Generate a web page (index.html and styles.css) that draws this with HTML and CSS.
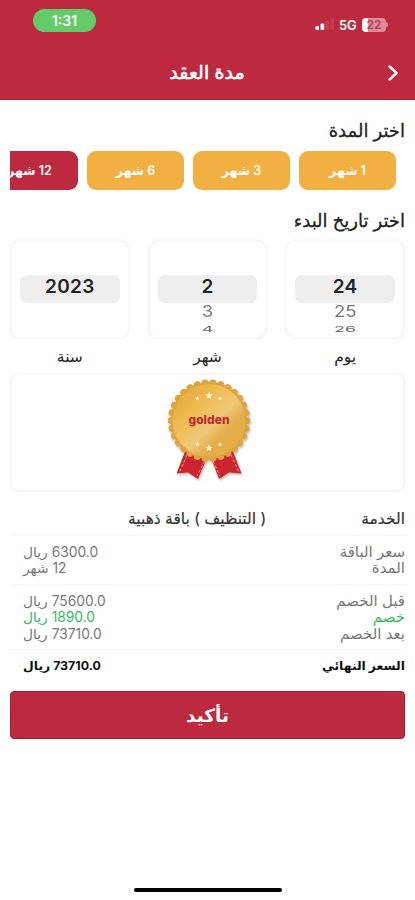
FILE: index.html
```html
<!DOCTYPE html>
<html lang="ar" dir="rtl">
<head>
    <meta charset="UTF-8">
    <title>مدة العقد</title>
    <link rel="stylesheet" href="styles.css">
</head>
<body>
<header class="header">
    <div class="status-bar" dir="ltr">
        <span class="time">1:31</span>
        <div class="status-icons">
            <svg class="signal" width="20" height="14" viewBox="0 0 20 14">
                <rect x="0.5" y="8" width="3.5" height="4" rx="1" fill="#fff"/>
                <rect x="5.5" y="5.5" width="3.7" height="6.5" rx="1" fill="#fff"/>
                <rect x="10.5" y="3" width="3.5" height="9" rx="1" fill="#c73b50"/>
                <rect x="15.5" y="0.5" width="3.5" height="11.5" rx="1" fill="#c73b50"/>
            </svg>
            <span class="network">5G</span>
            <span class="battery">22</span>
            <span class="battery-tip"></span>
        </div>
    </div>
    <div class="title-bar">
        <h1>مدة العقد</h1>
        <svg class="back" width="12" height="18" viewBox="0 0 12 18">
            <path d="M2.500 2.500 L9.500 9 L2.500 15.500" fill="none" stroke="#fff" stroke-width="2.5" stroke-linecap="round" stroke-linejoin="round"/>
        </svg>
    </div>
</header>
<main class="container">
    <h2>اختر المدة</h2>
    <div class="durations">
        <button class="duration">1 شهر</button>
        <button class="duration">3 شهر</button>
        <button class="duration">6 شهر</button>
        <button class="duration active">12 شهر</button>
    </div>
    <h2 class="date-title">اختر تاريخ البدء</h2>
    <div class="pickers">
        <div class="picker">
            <div class="wheel">
                <span class="selected">24</span>
                <span class="next">25</span>
                <span class="last">26</span>
            </div>
            <p>يوم</p>
        </div>
        <div class="picker">
            <div class="wheel">
                <span class="selected">2</span>
                <span class="next">3</span>
                <span class="last">4</span>
            </div>
            <p>شهر</p>
        </div>
        <div class="picker">
            <div class="wheel">
                <span class="selected">2023</span>
            </div>
            <p>سنة</p>
        </div>
    </div>
    <div class="package">
        <svg class="medal" width="90" height="108" viewBox="0 0 90 108">
            <defs>
                <linearGradient id="gold" x1="0" y1="0" x2="1" y2="1">
                    <stop offset="0" stop-color="#e0a032"/>
                    <stop offset="0.35" stop-color="#efbd55"/>
                    <stop offset="0.55" stop-color="#f0c878"/>
                    <stop offset="0.7" stop-color="#e2ac4a"/>
                    <stop offset="1" stop-color="#e9b040"/>
                </linearGradient>
                <path id="star" d="M0 -3.8 L1 -1.2 L3.7 -1.1 L1.6 0.6 L2.3 3.2 L0 1.7 L-2.3 3.2 L-1.6 0.6 L-3.7 -1.1 L-1 -1.2 Z" fill="#fff4dc"/>
            </defs>
            <g class="shadow">
                <path d="M22 74 L12.500 98.500 L24 97.500 L34 104 L44 80 Z" fill="#cc2430"/>
                <path d="M68 74 L77.500 98.500 L65 97.500 L55 104 L46 80 Z" fill="#cc2430"/>
                <path d="M23 80 L15.500 97 M41 86 L33 101 M49 86 L56 101 M67 80 L75 97" stroke="#efaa62" stroke-width="1" stroke-dasharray="3 2"/>
                <circle cx="45" cy="45.500" r="38.500" fill="#e0a43e"/>
                <circle class="scallop" cx="45" cy="45.500" r="37.800" pathLength="180"/>
            </g>
            <circle cx="45" cy="45.500" r="36.500" fill="url(#gold)"/>
            <use href="#star" x="45" y="20.500"/>
            <use href="#star" transform="translate(33.500 23.500) scale(.65)"/>
            <use href="#star" transform="translate(56 23.500) scale(.65)"/>
            <use href="#star" x="45" y="73"/>
            <use href="#star" transform="translate(33.500 69.500) scale(.65)"/>
            <use href="#star" transform="translate(56 69.500) scale(.65)"/>
            <text x="45" y="49" text-anchor="middle" direction="ltr" class="medal-text" textLength="41">golden</text>
        </svg>
    </div>
    <div class="summary">
        <div class="group service">
            <div class="row"><span>الخدمة</span><span class="service-name">( التنظيف ) باقة ذهبية</span></div>
        </div>
        <div class="group">
            <div class="row"><span>سعر الباقة</span><span class="value">6300.0 ريال</span></div>
            <div class="row"><span>المدة</span><span class="value">12 شهر</span></div>
        </div>
        <div class="group">
            <div class="row"><span>قبل الخصم</span><span class="value">75600.0 ريال</span></div>
            <div class="row discount"><span>خصم</span><span class="value">1890.0 ريال</span></div>
            <div class="row"><span>بعد الخصم</span><span class="value">73710.0 ريال</span></div>
        </div>
        <div class="group total">
            <div class="row"><span>السعر النهائي</span><span>73710.0 ريال</span></div>
        </div>
    </div>
    <button class="confirm">تأكيد</button>
</main>
<div class="home-bar"></div>
</body>
</html>
```

FILE: styles.css
```css
* { box-sizing: border-box; }
body {
    margin: 0;
    height: 900px;
    display: flex;
    flex-direction: column;
    overflow: hidden;
    background: #fff;
    color: #222;
    font-family: Inter, "DejaVu Sans", sans-serif;
}
h1, h2, p { margin: 0; }
button {
    border: none;
    padding: 0;
    font-family: inherit;
    color: #fff;
}
.header {
    height: 100px;
    background: #bd293f;
    border-bottom: 1px solid #b01a30;
    color: #fff;
}
.status-bar {
    height: 45px;
    padding: 9px 27px 0 33px;
    display: flex;
    justify-content: space-between;
}
.time {
    width: 63px;
    height: 23px;
    line-height: 23px;
    border-radius: 12px;
    background: #63cb67;
    text-align: center;
    font-size: 14px;
    font-weight: 600;
}
.status-icons {
    display: flex;
    align-items: center;
    height: 31px;
}
.network {
    margin-left: 4px;
    width: 18px;
    font-size: 13px;
    font-weight: 600;
    letter-spacing: -0.3px;
}
.battery {
    margin-left: 5px;
    width: 24px;
    height: 14px;
    line-height: 14px;
    border-radius: 4px;
    background: linear-gradient(to right, #fff 6px, #dc8c9a 6px);
    color: #b63c50;
    text-align: center;
    font-size: 12px;
    font-weight: 600;
}
.battery-tip {
    width: 2px;
    height: 5px;
    border-radius: 0 2px 2px 0;
    background: #dc8c9a;
}
.title-bar {
    height: 55px;
    padding: 0 16px;
    display: flex;
    align-items: center;
    flex-direction: row-reverse;
}
h1 {
    flex: 1;
    padding-left: 11px;
    text-align: center;
    font-size: 19px;
    line-height: 24px;
    font-weight: 400;
    -webkit-text-stroke: 0.6px #fff;
}
.container {
    padding: 0 10px;
    flex: 1;
}
h2 {
    height: 51px;
    padding-top: 8px;
    line-height: 45px;
    font-size: 18px;
    font-weight: 400;
    -webkit-text-stroke: 0.3px #222;
}
.durations {
    display: flex;
    gap: 9px;
    padding-right: 9px;
    overflow: hidden;
}
.duration {
    flex: 0 0 97px;
    height: 39px;
    border-radius: 9px;
    background: #f1b041;
    font-size: 12.5px;
    font-weight: 600;
}
.duration.active { background: #bd293f; }
.date-title { height: 50px; }
.pickers {
    display: flex;
    gap: 18px;
}
.picker {
    flex: 1;
    text-align: center;
}
.picker p {
    height: 34px;
    line-height: 36px;
    font-size: 15.5px;
}
.wheel {
    height: 99px;
    padding: 33px 8px 0;
    display: flex;
    flex-direction: column;
    border: 2px solid #f7f7f7;
    border-radius: 10px;
    box-shadow: 0 0 3px #f3f3f3;
    font-size: 16px;
}
.selected {
    height: 28px;
    line-height: 24px;
    border-radius: 7px;
    background: #eee;
    font-size: 19px;
    font-weight: 600;
    letter-spacing: 0.3px;
}
.next {
    height: 18px;
    line-height: 16px;
    color: #777;
    font-size: 18.5px;
    transform: scaleY(0.85);
}
.last {
    height: 16px;
    line-height: 16px;
    color: #666;
    font-size: 18px;
    transform: scaleY(0.45);
}
.package {
    height: 119px;
    display: flex;
    justify-content: center;
    border: 2px solid #f7f7f7;
    border-radius: 9px;
    box-shadow: 0 0 3px #f3f3f3;
}
.medal {
    position: relative;
    left: 1px;
}
.shadow { filter: drop-shadow(1px 2px 1px rgba(0, 0, 0, 0.25)); }
.scallop {
    fill: none;
    stroke: #e0a43e;
    stroke-width: 7;
    stroke-linecap: round;
    stroke-dasharray: 0.01 5.99;
}
.medal-text {
    fill: #c3272b;
    font-size: 12px;
    font-weight: 800;
}
.group {
    padding: 8px 0 7px 13px;
    border-bottom: 1px solid #f5f5f5;
    color: #777;
    font-size: 15px;
}
.row {
    height: 16.5px;
    line-height: 16.5px;
    display: flex;
    justify-content: space-between;
}
.value { font-size: 13.8px; }
.service {
    height: 43.5px;
    padding-top: 19px;
    color: #333;
    font-size: 15.5px;
    -webkit-text-stroke: 0.2px #333;
}
.service-name { margin-left: 105px; }
.discount { color: #35bd5b; }
.total {
    border: none;
    color: #111;
    font-size: 12.4px;
    font-weight: 700;
    height: 40.5px;
}
.confirm {
    display: block;
    width: 100%;
    height: 48px;
    border: 1px solid #b3152f;
    border-radius: 4px;
    background: #bd293f;
    font-size: 18.5px;
    font-weight: 600;
}
.home-bar {
    width: 148px;
    height: 4px;
    margin: 0 auto 8px;
    border-radius: 2px;
    background: #000;
}
```
